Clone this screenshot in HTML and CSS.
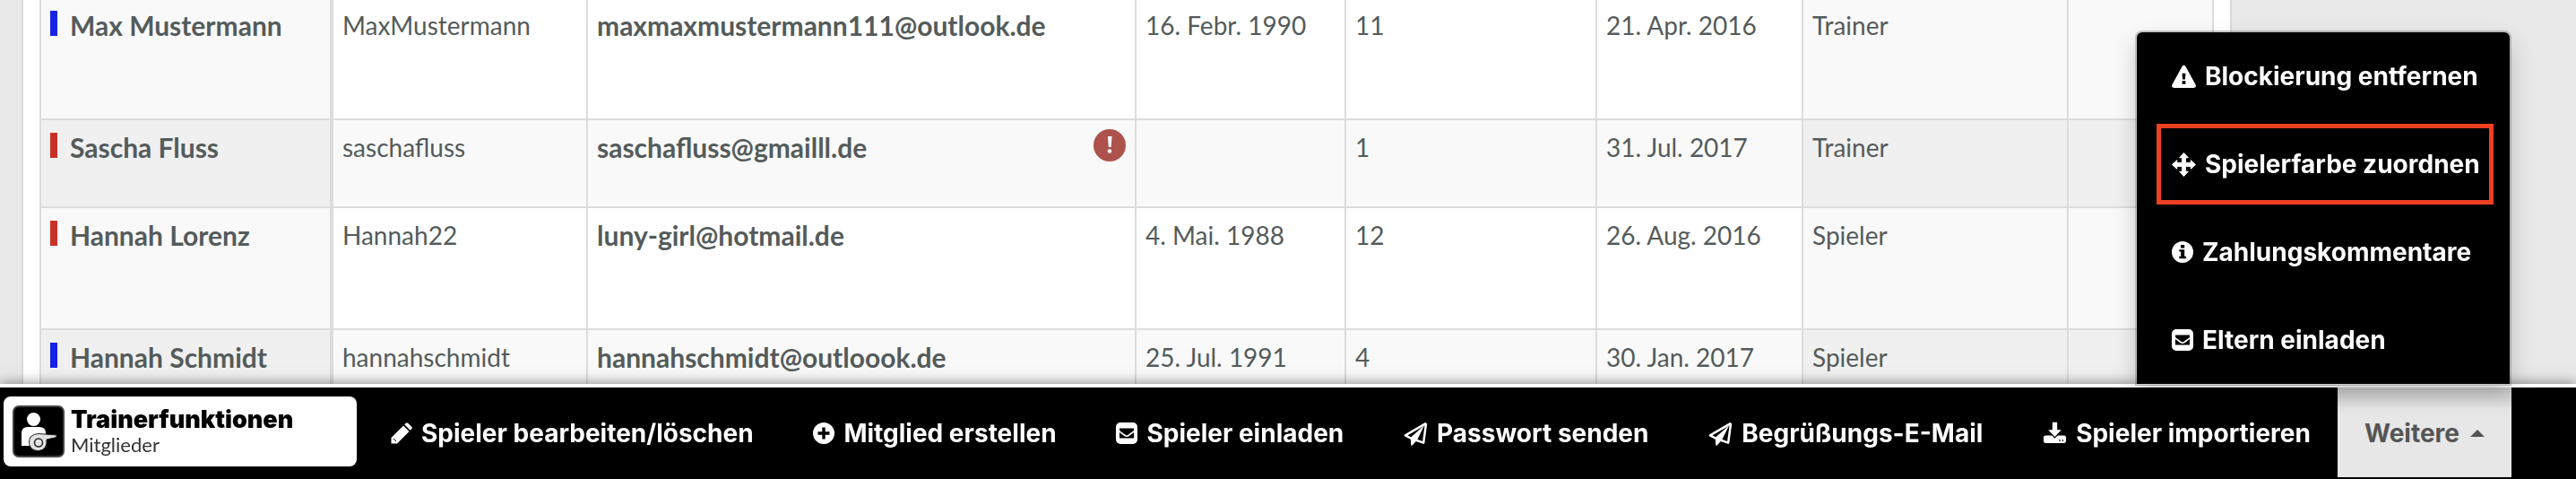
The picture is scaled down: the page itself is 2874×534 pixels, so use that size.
FILE: index.html
```
<!DOCTYPE html>
<html lang="de">
<head>
    <meta charset="UTF-8">
    <meta name="viewport" content="width=device-width, initial-scale=1.0">
    <title>Trainerfunktionen - Mitglieder</title>
    <link rel="stylesheet" href="styles.css">
</head>
<body>
    <!-- icon sprite -->
    <svg class="sprite" aria-hidden="true">
        <symbol id="i-mail" viewBox="0 0 24 24">
            <path fill-rule="evenodd" d="M5 0h14a5 5 0 0 1 5 5v14a5 5 0 0 1-5 5H5a5 5 0 0 1-5-5V5a5 5 0 0 1 5-5zM4 6.500v2.500l6.500 4.800q1.500 1 3 0L20 9V6.500zM4 11v6.500h16V11l-5.500 4.200q-2.500 1.600-5 0z"/>
        </symbol>
        <symbol id="i-plane" viewBox="0 0 28 28">
            <path fill="none" stroke="currentColor" stroke-width="2.600" stroke-linejoin="round" d="M26 2L2 16l7 3.500M26 2l-3 22.500-8.500-3"/>
            <path d="M8 18.500L24 4.500 15.500 21.500 10 27.500q-1.500.800-1.500-1z"/>
        </symbol>
    </svg>

    <main class="panel">
        <table class="members">
            <colgroup>
                <col class="col-name">
                <col class="col-user">
                <col>
                <col class="col-birth">
                <col class="col-number">
                <col class="col-joined">
                <col class="col-role">
                <col class="col-more">
            </colgroup>
            <tbody>
                <tr class="tall">
                    <th scope="row"><span class="marker blue"></span>Max Mustermann</th>
                    <td>MaxMustermann</td>
                    <td class="mail">maxmaxmustermann111@outlook.de</td>
                    <td>16. Febr. 1990</td>
                    <td>11</td>
                    <td>21. Apr. 2016</td>
                    <td class="shade">Trainer</td>
                    <td class="shade"></td>
                </tr>
                <tr>
                    <th scope="row"><span class="marker red"></span>Sascha Fluss</th>
                    <td>saschafluss</td>
                    <td class="mail">
                        <div class="mail-row">saschafluss@gmailll.de
                            <svg class="alert" viewBox="0 0 36 36" role="img" aria-label="Fehler"><circle cx="18" cy="18" r="18" fill="#ad524c"/><path fill="#fff" d="M16 8h4.500l-.800 12h-2.900z"/><circle cx="18" cy="24.500" r="2.300" fill="#fff"/></svg>
                        </div>
                    </td>
                    <td></td>
                    <td>1</td>
                    <td>31. Jul. 2017</td>
                    <td class="shade">Trainer</td>
                    <td class="shade"></td>
                </tr>
                <tr class="tall">
                    <th scope="row"><span class="marker red"></span>Hannah Lorenz</th>
                    <td>Hannah22</td>
                    <td class="mail">luny-girl@hotmail.de</td>
                    <td>4. Mai. 1988</td>
                    <td>12</td>
                    <td>26. Aug. 2016</td>
                    <td class="shade">Spieler</td>
                    <td class="shade"></td>
                </tr>
                <tr class="tall">
                    <th scope="row"><span class="marker blue"></span>Hannah Schmidt</th>
                    <td>hannahschmidt</td>
                    <td class="mail">hannahschmidt@outloook.de</td>
                    <td>25. Jul. 1991</td>
                    <td>4</td>
                    <td>30. Jan. 2017</td>
                    <td class="shade">Spieler</td>
                    <td class="shade"></td>
                </tr>
            </tbody>
        </table>
    </main>

    <footer class="toolbar">
        <a class="brand" href="#">
            <svg class="brand-icon" viewBox="0 0 58 58" aria-hidden="true">
                <rect x="1" y="1" width="56" height="56" rx="6" fill="#000" stroke="#444" stroke-width="2"/>
                <circle cx="23.500" cy="15.500" r="7.500" fill="#fff"/>
                <path fill="#fff" d="M10 45V31q0-7 7-7h13q7 0 7 7v14z"/>
                <path fill="#e2e2e2" stroke="#222" stroke-width="1" d="M20 35q4-3.500 9-3.500L49 33v2.500L38 38q1 11.500-9 12.500-9 0-10.500-8-.300-4 1.500-7.500z"/>
                <circle cx="29" cy="41.500" r="4.500" fill="#e2e2e2" stroke="#222" stroke-width="1.500"/>
            </svg>
            <span class="brand-text">
                <strong>Trainerfunktionen</strong>
                <small>Mitglieder</small>
            </span>
        </a>

        <nav class="actions">
            <button type="button">
                <svg class="icon" viewBox="0 0 24 24" aria-hidden="true"><path d="M14 3.500L20.500 10 7 23.500H.500V17zM15.200 2.300L16.800.800q1.200-1.200 2.400 0l4 4q1.200 1.200 0 2.400l-1.500 1.600z"/><path d="M3 18l3 3" stroke="#000" stroke-width="1"/></svg>
                Spieler bearbeiten/löschen
            </button>
            <button type="button">
                <svg class="icon" viewBox="0 0 24 24" aria-hidden="true"><path fill-rule="evenodd" d="M12 0a12 12 0 1 0 0 24 12 12 0 0 0 0-24zM10.300 5.500h3.400v4.800h4.800v3.400h-4.800v4.800h-3.400v-4.800H5.500v-3.400h4.800z"/></svg>
                Mitglied erstellen
            </button>
            <button type="button"><svg class="icon" aria-hidden="true"><use href="#i-mail"/></svg>Spieler einladen</button>
            <button type="button"><svg class="icon wide" aria-hidden="true"><use href="#i-plane"/></svg>Passwort senden</button>
            <button type="button"><svg class="icon wide" aria-hidden="true"><use href="#i-plane"/></svg>Begrüßungs-E-Mail</button>
            <button type="button">
                <svg class="icon wide" viewBox="0 0 28 28" aria-hidden="true"><rect x="1" y="16" width="26" height="9" rx="2.500"/><path stroke="#000" stroke-width="1.400" d="M10.500 0h7v9H23l-9 9.500L5 9h5.500z"/><path fill="#000" d="M19 21h1.500v1.500H19zM22.500 21H24v1.500h-1.500z"/></svg>
                Spieler importieren
            </button>
        </nav>

        <div class="more">
            <button type="button" class="more-toggle" aria-expanded="true">Weitere <span class="caret"></span></button>
            <div class="more-menu">
                <a href="#"><svg class="icon wide" viewBox="0 0 28 28" aria-hidden="true"><path fill-rule="evenodd" d="M12 2.200q2-3 4 0l11.500 21q1.500 3.500-2 3.800h-23q-3.500-.300-2-3.800zM12 10l.500 7h3l.500-7zM12 19v3.500h4V19z"/></svg>Blockierung entfernen</a>
                <a href="#" class="marked"><svg class="icon wide" viewBox="0 0 28 28" aria-hidden="true"><path stroke="currentColor" stroke-width="1" stroke-linejoin="round" d="M14 .500l5 5.500h-3v6h6V9l5.500 5-5.500 5v-3h-6v6h3l-5 5.500L9 22h3v-6H6v3L.500 14 6 9v3h6V6H9z"/></svg>Spielerfarbe zuordnen</a>
                <a href="#"><svg class="icon" viewBox="0 0 24 24" aria-hidden="true"><path fill-rule="evenodd" d="M12 0a12 12 0 1 0 0 24 12 12 0 0 0 0-24zM10 4h4.200v3.500H10zM8.300 9.200h5.900v7.600h1.800v2.400H8.300v-2.400h1.900v-5.200H8.300z"/></svg>Zahlungskommentare</a>
                <a href="#"><svg class="icon" aria-hidden="true"><use href="#i-mail"/></svg>Eltern einladen</a>
            </div>
        </div>
    </footer>
</body>
</html>
```
FILE: styles.css
```
* {
    box-sizing: border-box;
}

html {
    height: 100%;
}

body {
    height: 100%;
    margin: 0;
    overflow: hidden;
    background: #e8e8e8;
    color: #545b5b;
    font-family: Lato, sans-serif;
    font-size: 28px;
    line-height: 40px;
}

.sprite {
    display: none;
}

/* member table */
.panel {
    margin: -2px 384px 0 24px;
    padding: 0 18px;
    background: #fff;
    border: 2px solid #d9d9d9;
    border-width: 0 2px;
}

.members {
    width: 100%;
    table-layout: fixed;
    border-spacing: 0;
    border-left: 2px solid #dcdcdc;
}

.col-name { width: 326px; }
.col-user { width: 284px; }
.col-birth { width: 234px; }
.col-number { width: 280px; }
.col-joined { width: 230px; }
.col-role { width: 296px; }
.col-more { width: 162px; }

.members th,
.members td {
    height: 98px;
    padding: 10px;
    vertical-align: top;
    text-align: left;
    background: #fff;
    border-right: 2px solid #dcdcdc;
    border-bottom: 2px solid #dcdcdc;
}

.members .tall > * {
    height: 136px;
}

.members th {
    border-right-width: 4px;
}

.members th,
.members .mail {
    font-size: 30px;
    font-weight: bold;
}

.members th,
.members .shade,
.members tr:nth-child(even) td {
    background: #f9f9f9;
}

.members tr:nth-child(even) th,
.members tr:nth-child(even) .shade {
    background: #f0f0f0;
}

.marker {
    display: inline-block;
    width: 8px;
    height: 28px;
    margin-right: 14px;
}

.blue { background: #1622e8; }
.red { background: #c93127; }

.mail-row {
    display: flex;
    justify-content: space-between;
}

.alert {
    width: 36px;
    height: 36px;
}

/* bottom toolbar */
.toolbar {
    position: fixed;
    left: 0;
    right: 0;
    bottom: 0;
    display: flex;
    height: 106px;
    padding: 0 72px 2px 4px;
    background: #000;
    border-top: 4px solid #fff;
    box-shadow: 0 0 14px rgba(0, 0, 0, 0.5);
    font-family: Inter, sans-serif;
    font-size: 28px;
    font-weight: bold;
}

.brand {
    display: flex;
    align-items: center;
    width: 394px;
    margin: 10px 0 12px;
    padding: 0 10px;
    gap: 7px;
    background: #fff;
    border-radius: 8px;
    color: #000;
    text-decoration: none;
}

.brand-icon {
    width: 58px;
    height: 58px;
}

.brand-text {
    padding-top: 2px;
}

.brand-text strong,
.brand-text small {
    display: block;
    line-height: 28px;
}

.brand-text strong {
    font-size: 27px;
}

.brand-text small {
    color: #333;
    font-family: Lato, sans-serif;
    font-size: 22px;
    font-weight: normal;
}

.actions {
    display: flex;
    flex: 1;
    justify-content: space-between;
    padding: 2px 30px 0 38px;
}

button {
    padding: 0;
    border: 0;
    background: none;
    color: #fff;
    font: inherit;
    cursor: pointer;
}

.actions button,
.more-menu a {
    display: flex;
    align-items: center;
    gap: 10px;
    white-space: nowrap;
}

.icon {
    width: 24px;
    height: 24px;
    flex: none;
    fill: currentColor;
}

.icon.wide {
    width: 27px;
    height: 27px;
}

.more {
    position: relative;
    display: flex;
}

.more-toggle {
    display: flex;
    align-items: center;
    gap: 12px;
    padding: 2px 30px 0;
    background: linear-gradient(#c8c8c8, #e7e7e7 24px);
    color: #555;
}

.caret {
    border: 8px solid transparent;
    border-top: 0;
    border-bottom: 8px solid #555;
}

.more-menu {
    position: absolute;
    right: 0;
    bottom: 102px;
    width: 420px;
    background: #000;
    background-clip: padding-box;
    border: 2px solid rgba(0, 0, 0, 0.2);
    border-radius: 8px 8px 0 0;
    box-shadow: 0 12px 24px rgba(0, 0, 0, 0.18);
}

.more-menu a {
    position: relative;
    height: 98px;
    padding-left: 39px;
    color: #fff;
    text-decoration: none;
}

.marked::after {
    content: "";
    position: absolute;
    inset: 4px 18px 4px 22px;
    border: 5px solid #ee4023;
}
```
